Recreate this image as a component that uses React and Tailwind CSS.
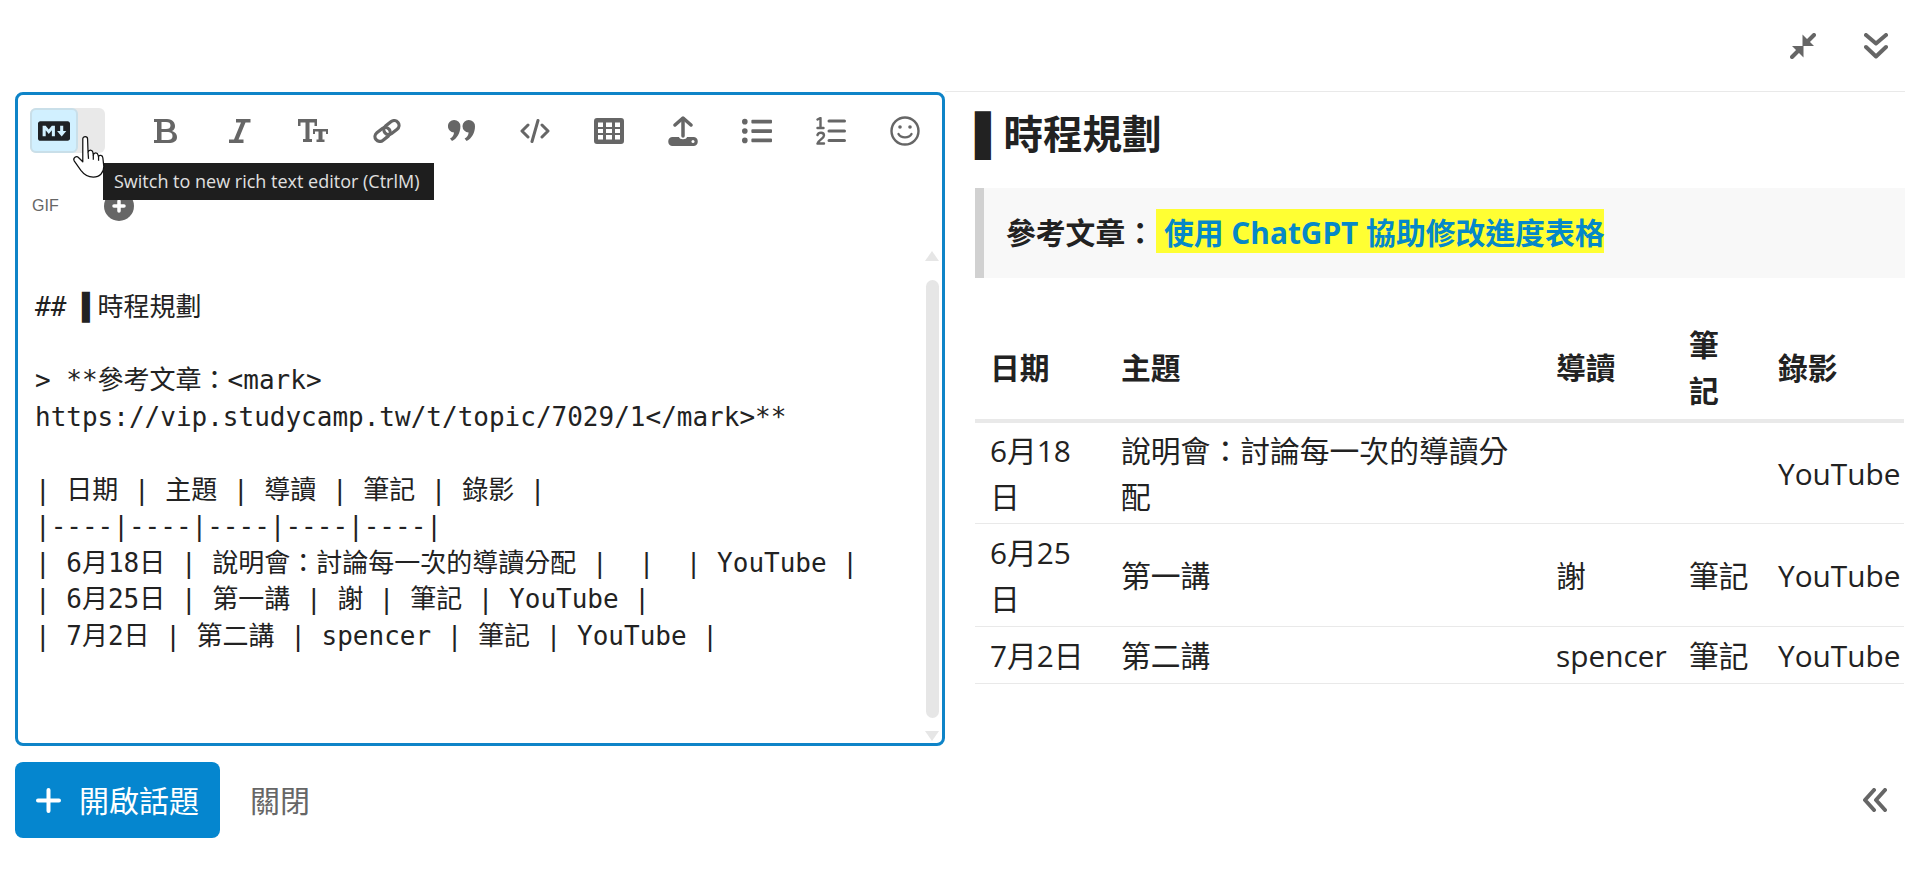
import React from "react";
import { FaListUl, FaMarkdown } from "react-icons/fa";

const BoldIcon = () => (
  <svg width="24" height="26" viewBox="0 0 24 26" fill="#666" fillRule="evenodd">
    <path d="M1 1H14C20 1 22 5 22 8C22 10.500 21 12 19 13C22 14 24 16 24 19C24 23 21 25 15 25H1V22H4V4H1ZM8.500 4V11H13C16 11 17.500 10 17.500 7.500C17.500 5 16 4 13 4ZM8.500 14V22H14C17.500 22 19.500 21 19.500 18C19.500 15 17.500 14 14 14Z" />
  </svg>
);
const ItalicIcon = () => (
  <svg width="23" height="26" viewBox="0 0 23 26" fill="#666">
    <path d="M8 1H22.500V4.500H17.500L10.500 21.500H15.500V25H1V21.500H6L13 4.500H8Z" />
  </svg>
);
const LinkIcon = () => (
  <svg width="30" height="24" viewBox="0 0 28 22" fill="none" stroke="#666" strokeWidth="3">
    <g transform="rotate(-38 14 11)">
      <rect x="1" y="6.500" width="15.500" height="9" rx="4.500" />
      <rect x="11.500" y="6.500" width="15.500" height="9" rx="4.500" />
    </g>
  </svg>
);
const QuoteIcon = () => (
  <svg width="27" height="21" viewBox="0 0 27 21" fill="#666">
    <path d="M6.200 0A6.200 6.200 0 0 1 12.400 6.200C12.400 13 9 18.500 4 21L2 18.500C4.500 17 6 15 6 12.400A6.200 6.200 0 0 1 6.200 0Z" />
    <path d="M20.800 0A6.200 6.200 0 0 1 27 6.200C27 13 23.600 18.500 18.600 21L16.600 18.500C19.100 17 20.600 15 20.600 12.400A6.200 6.200 0 0 1 20.800 0Z" />
  </svg>
);
const TextIcon = () => (
  <svg width="30" height="24" viewBox="0 0 30 24" fill="#666">
    <path d="M0 0H19V7H16.500V3.500H11.500V20H14V23H5V20H7.500V3.500H2.500V7H0Z" />
    <path d="M15 10H30V15H28V12.500H24.500V20.500H26.500V23H18.500V20.500H20.500V12.500H17V15H15Z" />
  </svg>
);
const CodeIcon = () => (
  <svg width="30" height="24" viewBox="0 0 30 24" fill="none" stroke="#666" strokeWidth="3" strokeLinecap="round" strokeLinejoin="round">
    <path d="M8 6L2 12L8 18" /><path d="M22 6L28 12L22 18" /><path d="M18 1.500L12 22.500" />
  </svg>
);
const TableIcon = () => (
  <svg width="30" height="26" viewBox="0 0 30 26" fill="#666" fillRule="evenodd">
    <path d="M3 0H27A3 3 0 0 1 30 3V23A3 3 0 0 1 27 26H3A3 3 0 0 1 0 23V3A3 3 0 0 1 3 0ZM4 4.500V9H9V4.500ZM12 4.500V9H18V4.500ZM21 4.500V9H26V4.500ZM4 11V15H9V11ZM12 11V15H18V11ZM21 11V15H26V11ZM4 17V21.500H9V17ZM12 17V21.500H18V17ZM21 17V21.500H26V17Z" />
  </svg>
);
const UploadIcon = () => (
  <svg width="30" height="30" viewBox="0 0 30 30" fill="#666">
    <path d="M7 9L15 2L23 9" fill="none" stroke="#666" strokeWidth="3.500" strokeLinecap="round" strokeLinejoin="round" />
    <path d="M15 3V20" stroke="#666" strokeWidth="3.500" strokeLinecap="round" />
    <path d="M4 21H11C11.500 24 18.500 24 19 21H26C31 21 31 30 26 30H4C-1 30 -1 21 4 21Z" />
    <circle cx="25" cy="25.500" r="1.500" fill="#fff" />
  </svg>
);
const OlIcon = () => (
  <svg width="30" height="28" viewBox="0 0 30 28" fill="none" stroke="#666" strokeWidth="3" strokeLinecap="round" strokeLinejoin="round">
    <path d="M13 4H28.500M13 14H28.500M13 23.500H28.500" />
    <path d="M1.500 2.500L4.500 1V11M1.500 11H7.500" strokeWidth="2.400" />
    <path d="M1.500 18C2.500 15 8 15 8 18.500C8 21.500 2.500 23 1.500 26.500H8" strokeWidth="2.400" />
  </svg>
);
const SmileIcon = () => (
  <svg width="30" height="30" viewBox="0 0 30 30" fill="none" stroke="#666" strokeWidth="2.400" strokeLinecap="round">
    <circle cx="15" cy="15" r="13.500" />
    <path d="M8.500 18C11 22.500 19 22.500 21.500 18" />
    <circle cx="10" cy="11" r="1.800" fill="#666" stroke="none" />
    <circle cx="20" cy="11" r="1.800" fill="#666" stroke="none" />
  </svg>
);
const HandCursor = () => (
  <svg width="34" height="44" viewBox="-1 -1 35 46" fill="#fff" stroke="#111" strokeWidth="1.300" strokeLinejoin="round">
    <path d="M10 3C10 0 15 0 15 3L15.500 17C16 14 20 14 20.500 17L21 20C21.500 17 25.500 17 26 20L26.500 22C27 19 31 20 31 23L32 32C32 38 28 43 21 43C14 43 11 40 8 36L1 26C-0.500 23 3 20 6 23L10 27Z" />
    <path d="M15.500 17L16 24M21 20L21 25M26.500 22L26.500 26" fill="none" />
  </svg>
);

const toolbar = [
  <BoldIcon key="b" />,
  <ItalicIcon key="i" />,
  <TextIcon key="t" />,
  <LinkIcon key="l" />,
  <QuoteIcon key="q" />,
  <CodeIcon key="c" />,
  <TableIcon key="tb" />,
  <UploadIcon key="u" />,
  <FaListUl key="ul" size={30} color="#666" />,
  <OlIcon key="ol" />,
  <SmileIcon key="s" />,
];

const lines = [
  "## ▌時程規劃",
  " ",
  "> **參考文章：<mark>",
  "https://vip.studycamp.tw/t/topic/7029/1</mark>**",
  " ",
  "| 日期 | 主題 | 導讀 | 筆記 | 錄影 |",
  "|----|----|----|----|----|",
  "| 6月18日 | 說明會：討論每一次的導讀分配 |  |  | YouTube |",
  "| 6月25日 | 第一講 | 謝 | 筆記 | YouTube |",
  "| 7月2日 | 第二講 | spencer | 筆記 | YouTube |",
];

const rows = [
  ["6月18日", "說明會：討論每一次的導讀分配", "", "", "YouTube", "h-[102px]"],
  ["6月25日", "第一講", "謝", "筆記", "YouTube", "h-[103px]"],
  ["7月2日", "第二講", "spencer", "筆記", "YouTube", "h-[57px]"],
];

export default function App() {
  return (
    <div className="h-[873px] w-[1920px] overflow-hidden bg-white text-[#222] font-['Open_Sans','Noto_Sans_CJK_TC',sans-serif]">
      <div className="flex h-[91px] items-center justify-end pr-[8px]">
        <div className="flex w-[73px] justify-center">
          <svg width="26" height="26" viewBox="0 0 26 26" fill="#666" stroke="#666" strokeWidth="4" strokeLinecap="round">
            <path d="M12.500 1.500V13H24Z" stroke="none" />
            <path d="M17 9L24 2" />
            <path d="M2 13H13.500V24.500Z" stroke="none" />
            <path d="M9 17L2 24" />
          </svg>
        </div>
        <div className="flex w-[73px] justify-center">
          <svg width="24" height="26" viewBox="0 0 24 26" fill="none" stroke="#666" strokeWidth="4" strokeLinecap="round" strokeLinejoin="round">
            <path d="M2 2L12 10.500L22 2" /><path d="M2 14L12 23.500L22 14" />
          </svg>
        </div>
      </div>

      <div className="flex">
        <div className="relative ml-[15px] mt-px h-[654px] w-[930px] rounded-lg border-[3px] border-[#0e84c8]">
          <div className="ml-[12px] mt-[13px] flex items-center">
            <div className="flex h-[45px] w-[75px] rounded-md bg-[#e9e9e9]">
              <div className="flex h-[45px] w-[48px] items-center justify-center rounded-md border-2 border-[#c9dfe9] bg-[#d1f0ff]">
                <FaMarkdown size={32} color="#1e2226" />
              </div>
            </div>
            <div className="ml-[23px] flex">
              {toolbar.map((icon, i) => (
                <div key={i} className="flex h-[45px] w-[74px] items-center justify-center">{icon}</div>
              ))}
            </div>
          </div>

          <div className="ml-[14px] mt-[38px] flex h-[30px] items-center">
            <span className="w-[72px] text-[16px] text-[#666] font-['Liberation_Sans',sans-serif]">GIF</span>
            <span className="flex h-[30px] w-[30px] items-center justify-center rounded-full bg-[#666]">
              <svg width="14" height="14" viewBox="0 0 14 14" stroke="#fff" strokeWidth="3.500" strokeLinecap="round">
                <path d="M7 2V12M2 7H12" />
              </svg>
            </span>
          </div>

          <div className="ml-[17px] mt-[68px] text-[26px] leading-[36.500px] text-[#222] font-['DejaVu_Sans_Mono','Noto_Sans_CJK_TC',monospace]">
            {lines.map((l, i) => (
              <div key={i} className="whitespace-pre">{l}</div>
            ))}
          </div>

          <div className="absolute right-[3px] top-[156px] h-0 w-0 border-x-[7px] border-b-[10px] border-x-transparent border-b-[#e6e6e6]" />
          <div className="absolute right-[3px] top-[185px] h-[438px] w-[13px] rounded-full bg-[#e6e6e6]" />
          <div className="absolute right-[3px] top-[636px] h-0 w-0 border-x-[7px] border-t-[10px] border-x-transparent border-t-[#e6e6e6]" />

          <div className="absolute left-[85px] top-[68px] z-10 flex h-[37px] w-[331px] items-center bg-[#1e1e1e] pl-[11px] text-[18px] text-[#e0e0e0]">
            Switch to new rich text editor (CtrlM)
          </div>
          <div className="absolute left-[54px] top-[40px] z-20">
            <HandCursor />
          </div>
        </div>

        <div className="w-[960px] border-t border-[#e9e9e9] pl-[30px]">
          <h2 className="flex h-[87px] items-center text-[39.500px] font-bold leading-[1.2]">
            <span className="mt-[2px] text-[41px] leading-[1.2] font-['DejaVu_Sans',sans-serif]">▌</span>
            <span className="-ml-[3px] -mt-[2px]">時程規劃</span>
          </h2>
          <div className="mt-[9px] flex h-[90px] items-center border-l-[9px] border-[#d1d1d1] bg-[#f8f8f8] pl-[22px] text-[29.800px] font-bold">
            <span>
              參考文章：
              <mark className="ml-px bg-[#ffff33] pl-[8px] pt-[3px] text-[#0588c8]">使用 ChatGPT 協助修改進度表格</mark>
            </span>
          </div>
          <table className="mt-[37px] w-[929px] table-fixed border-collapse text-[29.800px] leading-[46px]">
            <colgroup>
              <col className="w-[146px]" />
              <col className="w-[435px]" />
              <col className="w-[133px]" />
              <col className="w-[89px]" />
              <col className="w-[126px]" />
            </colgroup>
            <thead>
              <tr className="h-[106px] border-b-[4px] border-[#e9e9e9] text-left font-bold">
                <th className="pl-[15px] pt-[2px]">日期</th>
                <th className="pt-[2px]">主題</th>
                <th className="pt-[2px]">導讀</th>
                <th className="pt-[2px]">筆<br />記</th>
                <th className="pt-[2px]">錄影</th>
              </tr>
            </thead>
            <tbody>
              {rows.map((r) => (
                <tr key={r[0]} className={`border-b border-[#e9e9e9] ${r[5]}`}>
                  <td className="pl-[15px] pr-[30px] pt-[2px]">{r[0]}</td>
                  <td className="pr-[30px] pt-[2px]">{r[1]}</td>
                  <td className="whitespace-nowrap pt-[2px]">{r[2]}</td>
                  <td className="whitespace-nowrap pt-[2px]">{r[3]}</td>
                  <td className="whitespace-nowrap pt-[2px]">{r[4]}</td>
                </tr>
              ))}
            </tbody>
          </table>
        </div>
      </div>

      <div className="mt-[16px] flex items-center pl-[15px] pr-[20px]">
        <button className="flex h-[76px] w-[205px] items-center justify-center gap-[18px] rounded-lg bg-[#0586cf] text-[30px] text-white">
          <svg width="25" height="25" viewBox="0 0 25 25" stroke="#fff" strokeWidth="4" strokeLinecap="round">
            <path d="M12.500 2V23M2 12.500H23" />
          </svg>
          開啟話題
        </button>
        <span className="ml-[30px] text-[30px] text-[#666]">關閉</span>
        <div className="ml-auto flex w-[50px] justify-center">
          <svg width="24" height="24" viewBox="0 0 24 24" fill="none" stroke="#666" strokeWidth="4" strokeLinecap="round" strokeLinejoin="round">
            <path d="M11 2L2 12L11 22" /><path d="M22 2L13 12L22 22" />
          </svg>
        </div>
      </div>
    </div>
  );
}
